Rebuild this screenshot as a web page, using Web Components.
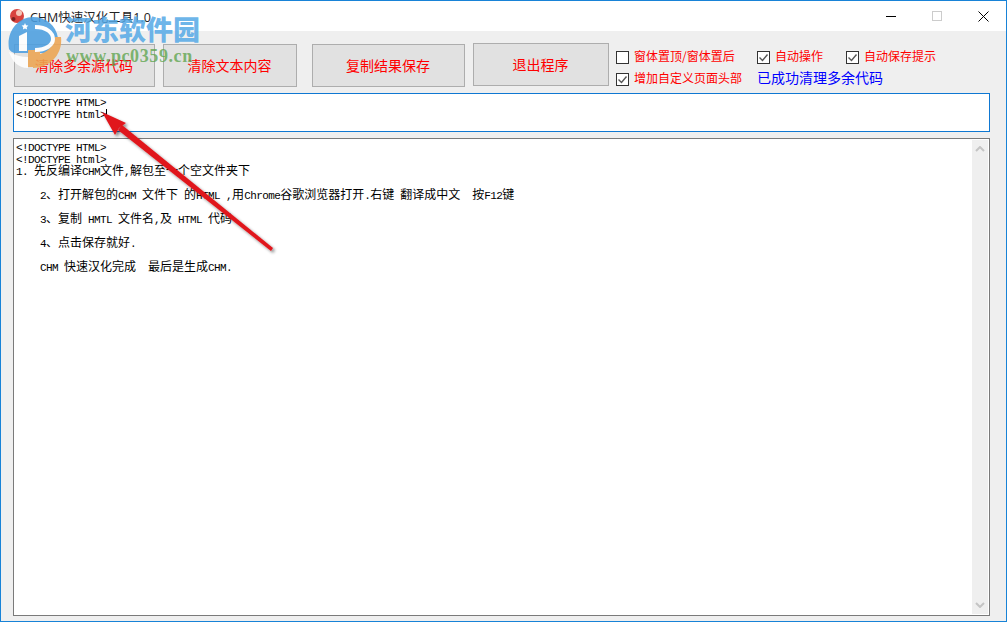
<!DOCTYPE html>
<html>
<head>
<meta charset="utf-8">
<style>
    html, body { margin: 0; height: 100%; overflow: hidden; }
    body { font-family: "Noto Sans CJK SC", sans-serif; }
</style>
</head>
<body>
<app-window>
    <span slot="title">CHM快速汉化工具1.0</span>
    <div slot="toolbar-buttons" style="display: contents">
        <win-button style="width: 141px">清除多余源代码</win-button>
        <win-button style="width: 134px; margin-left: 8px">清除文本内容</win-button>
        <win-button style="width: 153px; margin-left: 15px">复制结果保存</win-button>
        <win-button style="width: 136px; margin-left: 8px; margin-top: -1px">退出程序</win-button>
    </div>
    <div slot="options" class="options">
        <win-check style="grid-area: 1 / 1">窗体置顶/窗体置后</win-check>
        <win-check style="grid-area: 1 / 2" checked>自动操作</win-check>
        <win-check style="grid-area: 1 / 3" checked>自动保存提示</win-check>
        <win-check style="grid-area: 2 / 1" checked>增加自定义页面头部</win-check>
        <span style="grid-area: 2 / 2 / 2 / 4; color: #0000ff; font-size: 14px; line-height: 16px; margin-top: -2px; white-space: nowrap">已成功清理多余代码</span>
    </div>
    <code-box slot="source" accent>
        <code-line><m-l>&lt;!DOCTYPE HTML&gt;</m-l></code-line>
        <code-line caret><m-l>&lt;!DOCTYPE html&gt;</m-l></code-line>
    </code-box>
    <code-box slot="result" scroll>
        <code-line><m-l>&lt;!DOCTYPE HTML&gt;</m-l></code-line>
        <code-line><m-l>&lt;!DOCTYPE html&gt;</m-l></code-line>
        <code-line><m-l>1. </m-l>先反编译<m-l>CHM</m-l>文件<m-l>,</m-l>解包至一个空文件夹下</code-line>
        <code-line gap indent><m-l>2</m-l>、打开解包的<m-l>CHM </m-l>文件下<m-l> </m-l>的<m-l>HTML ,</m-l>用<m-l>Chrome</m-l>谷歌浏览器打开<m-l>.</m-l>右键<m-l> </m-l>翻译成中文<m-l>  </m-l>按<m-l>F12</m-l>键</code-line>
        <code-line gap indent><m-l>3</m-l>、复制<m-l> HMTL </m-l>文件名<m-l>,</m-l>及<m-l> HTML </m-l>代码</code-line>
        <code-line gap indent><m-l>4</m-l>、点击保存就好<m-l>.</m-l></code-line>
        <code-line gap indent><m-l>CHM </m-l>快速汉化完成<m-l>  </m-l>最后是生成<m-l>CHM.</m-l></code-line>
    </code-box>
</app-window>

<script>
    const windowTemplate = document.createElement('template');
    windowTemplate.innerHTML = `
<style>
    :host {
        display: flex;
        flex-direction: column;
        position: relative;
        box-sizing: border-box;
        width: 1007px;
        height: 622px;
        border: 1px solid #1883d7;
        background: #efefef;
        overflow: hidden;
        font-family: "Noto Sans CJK SC", sans-serif;
    }
    #titlebar {
        display: flex;
        align-items: center;
        height: 30px;
        background: #fff;
        font: 12.5px "Open Sans", "Noto Sans CJK SC", sans-serif;
        color: #222;
    }
    #app-icon { margin: 0 5px 0 8px; }
    #controls { margin-left: auto; display: flex; }
    #controls div { width: 46px; height: 30px; display: flex; align-items: center; justify-content: center; }
    #content { display: flex; flex-direction: column; flex: 1; padding: 12px 16px 5px 12px; }
    #toolbar { display: flex; align-items: flex-start; height: 50px; margin-left: 1px; padding-top: 1px; box-sizing: border-box; }
    #options { margin-left: 7px; padding-top: 1px; }
    ::slotted(.options) {
        display: grid;
        grid-template-columns: 141px 89px auto;
        grid-template-rows: 22px 22px;
        align-items: center;
        justify-items: start;
    }
    ::slotted(code-box[accent]) { height: 39px; flex: none; }
    ::slotted(code-box[scroll]) { flex: 1; margin-top: 6px; }
    #logo { position: absolute; left: -1px; top: -1px; pointer-events: none; }
    #wm-name {
        position: absolute;
        left: 64px;
        top: 12px;
        font: 900 27px/32px "Noto Sans CJK SC", sans-serif;
        color: rgba(84, 168, 230, 0.85);
        white-space: nowrap;
    }
    #wm-url {
        position: absolute;
        left: 65px;
        top: 45px;
        font: bold 18px/20px "Liberation Serif", serif;
        letter-spacing: 0.6px;
        color: rgba(96, 165, 80, 0.8);
        white-space: nowrap;
    }
    #arrow { position: absolute; left: 89px; top: 99px; pointer-events: none; }
</style>
<div id="titlebar">
    <svg id="app-icon" width="16" height="16" viewBox="0 0 16 16">
        <circle cx="8" cy="8" r="7" fill="#d8433f"/>
        <circle cx="10" cy="5" r="3" fill="#f4c6b8"/>
        <circle cx="4.5" cy="11" r="2" fill="#7a2320"/>
    </svg>
    <slot name="title"></slot>
    <div id="controls">
        <div><svg width="10" height="10"><rect x="0" y="5" width="10" height="1" fill="#000"/></svg></div>
        <div><svg width="10" height="10"><rect x=".5" y=".5" width="9" height="9" fill="none" stroke="#ccc"/></svg></div>
        <div><svg width="11" height="11"><path d="M.5 .5 10.5 10.5M10.5 .5 .5 10.5" stroke="#000" fill="none"/></svg></div>
    </div>
</div>
<div id="content">
    <div id="toolbar">
        <slot name="toolbar-buttons"></slot>
        <div id="options"><slot name="options"></slot></div>
    </div>
    <slot name="source"></slot>
    <slot name="result"></slot>
</div>
<svg id="logo" width="70" height="70" viewBox="0 0 70 70">
    <g opacity=".88">
        <path d="M9 49C6 32 18 17 33 17c13 0 23 8 25 21 1 6-1 11-5 15H14C12 52 10 51 9 49Z" fill="#4c9fe0"/>
        <path d="M61 37c2 16-10 31-28 31V55c12 0 20-7 22-18Z" fill="#eda552"/>
        <path d="M28 50h12v17H28Z" fill="#eda552"/>
        <path d="M9 52c6 3 12 5 19 5v11C18 68 12 61 9 52Z" fill="#fff"/>
        <path d="M19 36 27 32v19h-8Z" fill="#fff"/>
        <path d="M35 27c12 0 18 6 18 12 0 6-7 11-18 11" fill="none" stroke="#fff" stroke-width="4"/>
        <path d="M25 23l1 2.2 2.4.3-1.7 1.7.4 2.4-2.1-1.1-2.1 1.1.4-2.4-1.7-1.7 2.4-.3Z" fill="#fff"/>
    </g>
</svg>
<div id="wm-name">河东软件园</div>
<div id="wm-url">www.pc0359.cn</div>
<svg id="arrow" width="200" height="160" viewBox="90 100 200 160">
    <defs><filter id="sh" x="-20%" y="-20%" width="140%" height="140%"><feDropShadow dx="2" dy="2" stdDeviation="1.6" flood-color="#000" flood-opacity=".45"/></filter></defs>
    <g filter="url(#sh)" fill="#e0161b">
        <path d="M273 248 122 125 118 130 271 251Z"/>
        <path d="M102 112 126 123 119 128 115 135Z"/>
    </g>
</svg>
`;

    class AppWindow extends HTMLElement {
        constructor() {
            super();
            this.attachShadow({ mode: 'open' });
            this.shadowRoot.appendChild(windowTemplate.content.cloneNode(true));
        }
    }

    class WinButton extends HTMLElement {
        constructor() {
            super();
            this.attachShadow({ mode: 'open' });
            this.shadowRoot.innerHTML = `
<style>
    :host {
        display: flex;
        flex: none;
        box-sizing: border-box;
        height: 43px;
        padding: 0 1px 2px 0;
        align-items: center;
        justify-content: center;
        background: #e1e1e1;
        border: 1px solid #adadad;
        color: #ff0000;
        font-size: 14px;
        white-space: nowrap;
    }
</style>
<slot></slot>`;
        }
    }

    class WinCheck extends HTMLElement {
        constructor() {
            super();
            this.attachShadow({ mode: 'open' });
            const tick = this.hasAttribute('checked')
                ? '<svg width="11" height="11" viewBox="0 0 11 11"><path d="M1.5 5.5 4.5 8.5 9.5 2.5" fill="none" stroke="#555" stroke-width="1.4"/></svg>'
                : '';
            this.shadowRoot.innerHTML = `
<style>
    :host {
        display: flex;
        align-items: center;
        color: #ff0000;
        font-size: 12px;
        line-height: 14px;
        white-space: nowrap;
    }
    #box {
        box-sizing: border-box;
        width: 13px;
        height: 13px;
        margin: 2px 5px 0 0;
        border: 1px solid #333;
        background: #fff;
        display: flex;
    }
</style>
<div id="box">${tick}</div>
<slot></slot>`;
        }
    }

    class CodeBox extends HTMLElement {
        constructor() {
            super();
            this.attachShadow({ mode: 'open' });
            const bar = this.hasAttribute('scroll') ? `
<div id="bar">
    <svg width="10" height="6"><path d="M1 5 5 1 9 5" fill="none" stroke="#c4c4c4" stroke-width="2"/></svg>
    <svg width="10" height="6"><path d="M1 1 5 5 9 1" fill="none" stroke="#c4c4c4" stroke-width="2"/></svg>
</div>` : '';
            this.shadowRoot.innerHTML = `
<style>
    :host {
        display: flex;
        box-sizing: border-box;
        border: 1px solid #7a7a7a;
        background: #fff;
        color: #000;
        overflow: hidden;
    }
    :host([accent]) { border-color: #0f78d2; }
    #text { flex: 1; padding: 1px 2px; }
    #bar {
        width: 16px;
        margin: 1px;
        background: #efefef;
        display: flex;
        flex-direction: column;
        justify-content: space-between;
        align-items: center;
        padding: 6px 0;
        box-sizing: border-box;
    }
</style>
<div id="text"><slot></slot></div>${bar}`;
        }
    }

    // no whitespace in these two shadow roots: they sit under white-space: pre
    class CodeLine extends HTMLElement {
        constructor() {
            super();
            this.attachShadow({ mode: 'open' });
            this.shadowRoot.innerHTML = '<style>'
                + ':host { display: block; font-size: 12px; line-height: 12px; height: 12px; white-space: pre; }'
                + ':host([gap]) { margin-top: 12px; }'
                + ':host([indent]) { padding-left: 24px; }'
                + '#caret { display: inline-block; width: 1px; height: 10px; background: #000; vertical-align: -1px; }'
                + '</style><slot></slot>'
                + (this.hasAttribute('caret') ? '<span id="caret"></span>' : '');
        }
    }

    // 11px less the spacing gives the 6px cell of the original's Latin glyphs
    class MonoRun extends HTMLElement {
        constructor() {
            super();
            this.attachShadow({ mode: 'open' });
            this.shadowRoot.innerHTML = '<style>:host { font-family: "Liberation Mono", monospace; font-size: 11px; letter-spacing: -0.6px; }</style><slot></slot>';
        }
    }

    customElements.define('app-window', AppWindow);
    customElements.define('win-button', WinButton);
    customElements.define('win-check', WinCheck);
    customElements.define('code-box', CodeBox);
    customElements.define('code-line', CodeLine);
    customElements.define('m-l', MonoRun);
</script>
</body>
</html>
